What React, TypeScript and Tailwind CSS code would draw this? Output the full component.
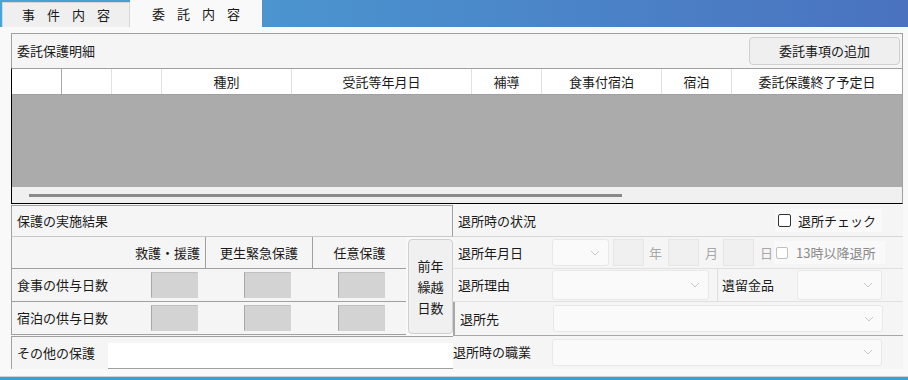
import React from "react";

const font = { fontFamily: '"Noto Sans CJK JP", "Noto Sans", sans-serif' };

function Chevron({ light = false }: { light?: boolean }) {
  return (
    <svg width="10" height="6" viewBox="0 0 10 6" className="shrink-0">
      <path d="M1 1 L5 5 L9 1" fill="none" stroke={light ? "#c8c8c8" : "#b0b0b0"} strokeWidth="1" />
    </svg>
  );
}

function Dropdown({ className }: { className: string }) {
  return (
    <div
      className={
        "flex items-center justify-end pr-[8px] bg-[#fafafa] border border-[#e8e8e8] rounded-[3px] " +
        className
      }
    >
      <Chevron light />
    </div>
  );
}

function NumBox({ className = "" }: { className?: string }) {
  return (
    <div
      className={
        "w-[47px] h-[26px] bg-[#d3d3d3] border border-[#d3d3d3] border-l-[#a8a8a8] border-t-[#c0c0c0] " +
        className
      }
    />
  );
}

const headers = [
  { w: "w-[50px]", label: "", dark: true },
  { w: "w-[50px]", label: "" },
  { w: "w-[50px]", label: "" },
  { w: "w-[130px]", label: "種別" },
  { w: "w-[180px]", label: "受託等年月日" },
  { w: "w-[70px]", label: "補導" },
  { w: "w-[120px]", label: "食事付宿泊" },
  { w: "w-[70px]", label: "宿泊" },
  { w: "flex-1", label: "委託保護終了予定日" },
];

export default function App() {
  return (
    <div className="w-[908px] h-[380px] overflow-hidden text-[13px] text-[#1a1a1a]" style={font}>
      {/* tab header */}
      <div className="h-[27px] flex items-end bg-gradient-to-r from-[#4aa3d6] to-[#4a72bf]">
        <div className="ml-[2px] w-[128px] h-[25px] bg-[#efefef] border border-b-0 border-[#d6d6d6] flex items-center justify-center tracking-[12px] pl-[12px]">
          事件内容
        </div>
        <div className="w-[132px] h-[27px] bg-[#f9f9f9] flex items-center justify-center tracking-[12px] pl-[12px]">
          委託内容
        </div>
      </div>

      {/* body */}
      <div className="h-[350px] bg-[#f9f9f9] pt-[6px] pl-[11px] border-b border-[#d0d0d0]">
        <div className="w-[892px]">
          {/* 委託保護明細 */}
          <div className="h-[35px] flex items-center justify-between pl-[5px] pr-[2px] bg-[#f5f5f5] border border-b-0 border-[#a0a0a0]">
            <span>委託保護明細</span>
            <button className="w-[151px] h-[28px] bg-[#efefef] border border-[#d0d0d0] rounded-[4px] text-[13px]" style={font}>
              委託事項の追加
            </button>
          </div>

          {/* grid */}
          <div className="border-t border-r border-[#a0a0a0] border-l border-l-black border-b border-b-black">
            <div className="h-[26px] flex bg-white border-b border-[#a0a0a0]">
              {headers.map((h, i) => (
                <div
                  key={i}
                  className={
                    h.w +
                    " h-full flex items-center justify-center " +
                    (i < headers.length - 1 ? (h.dark ? "border-r border-[#a8a8a8]" : "border-r border-[#e0e0e0]") : "")
                  }
                >
                  {h.label}
                </div>
              ))}
            </div>
            <div className="h-[92px] bg-[#ababab]" />
            <div className="h-[16px] bg-[#f0f0f0] flex items-center pl-[17px]">
              <div className="w-[593px] h-[3px] bg-[#8a8a8a]" />
            </div>
          </div>

          {/* lower section */}
          <div className="flex pt-[1px]">
            {/* left column */}
            <div className="w-[442px]">
              <div className="h-[32px] flex items-center pl-[5px] bg-[#f5f5f5] border border-[#a0a0a0] border-b-[#c8c8c8]">
                保護の実施結果
              </div>
              <div className="flex">
                <div className="w-[395px] bg-[#f5f5f5]">
                  <div className="h-[32px] flex border-l border-b border-[#a0a0a0]">
                    <div className="w-[194px] flex items-center justify-end pr-[5px] border-r border-[#a0a0a0]">
                      救護・援護
                    </div>
                    <div className="w-[107px] flex items-center justify-center border-r border-[#a0a0a0]">
                      更生緊急保護
                    </div>
                    <div className="flex-1 flex items-center justify-center">任意保護</div>
                  </div>
                  <div className="h-[33px] flex items-center border-l border-b border-[#a0a0a0]">
                    <div className="w-[139px] pl-[5px]">食事の供与日数</div>
                    <NumBox />
                    <NumBox className="ml-[46px]" />
                    <NumBox className="ml-[47px]" />
                  </div>
                  <div className="h-[33px] flex items-center border-l border-b border-[#a0a0a0]">
                    <div className="w-[139px] pl-[5px]">宿泊の供与日数</div>
                    <NumBox />
                    <NumBox className="ml-[46px]" />
                    <NumBox className="ml-[47px]" />
                  </div>
                </div>
                <div className="flex-1 pl-[2px] pt-[2px] pb-[2px]">
                  <div className="h-[95px] w-[45px] bg-[#f0f0f0] border border-[#d0d0d0] rounded-[4px] flex flex-col items-center justify-center leading-[21px]">
                    <span>前年</span>
                    <span>繰越</span>
                    <span>日数</span>
                  </div>
                </div>
              </div>
              <div className="h-[33px] flex items-center border-l border-t border-[#a0a0a0] bg-[#f5f5f5]">
                <div className="w-[96px] pl-[5px]">その他の保護</div>
                <div className="flex-1 h-[26px] mt-[5px] bg-white border-b border-[#a0a0a0]" />
              </div>
            </div>

            {/* right column */}
            <div className="flex-1 bg-[#f5f5f5]">
              <div className="h-[32px] flex items-center pl-[5px] border-b border-[#d8d8d8]">
                <div className="w-[317px]">退所時の状況</div>
                <div className="w-[107px] h-[23px] bg-[#f9f9f9] flex items-center pl-[3px]">
                  <div className="w-[13px] h-[13px] border border-[#333] rounded-[2px] bg-white" />
                  <span className="ml-[7px]">退所チェック</span>
                </div>
              </div>
              <div className="h-[32px] flex items-center pl-[5px] border-b border-[#e0e0e0]">
                <div className="w-[94px]">退所年月日</div>
                <Dropdown className="w-[57px] h-[27px]" />
                <div className="ml-[4px] w-[31px] h-[27px] bg-[#f0f0f0] border border-[#e6e6e6]" />
                <span className="ml-[5px] w-[19px] text-[#a8a8a8]">年</span>
                <div className="w-[31px] h-[27px] bg-[#f0f0f0] border border-[#e6e6e6]" />
                <span className="ml-[6px] w-[18px] text-[#a8a8a8]">月</span>
                <div className="w-[31px] h-[27px] bg-[#f0f0f0] border border-[#e6e6e6]" />
                <span className="ml-[6px] w-[14px] text-[#a8a8a8]">日</span>
                <div className="w-[111px] h-[23px] bg-[#f9f9f9] flex items-center pl-[2px]">
                  <div className="w-[12px] h-[12px] border border-[#c0c0c0] rounded-[2px] bg-white" />
                  <span className="ml-[8px] text-[#8a8a8a]">13時以降退所</span>
                </div>
              </div>
              <div className="h-[33px] flex items-center pl-[5px] border-b border-[#e0e0e0]">
                <div className="w-[94px]">退所理由</div>
                <Dropdown className="w-[157px] h-[30px]" />
                <div className="ml-[8px] h-full border-l border-[#e0e0e0] pl-[4px] w-[80px] flex items-center">
                  遺留金品
                </div>
                <Dropdown className="w-[85px] h-[30px]" />
              </div>
              <div className="h-[33px] flex items-center pl-[5px] border-l-2 border-[#a8a8a8]">
                <div className="w-[93px]">退所先</div>
                <Dropdown className="w-[330px] h-[27px]" />
              </div>
              <div className="h-[33px] flex items-center border-t border-[#a8a8a8]">
                <div className="w-[99px]">退所時の職業</div>
                <Dropdown className="w-[330px] h-[27px]" />
              </div>
            </div>
          </div>
        </div>
      </div>
      <div className="h-[3px] bg-[#3aa0d8]" />
    </div>
  );
}
